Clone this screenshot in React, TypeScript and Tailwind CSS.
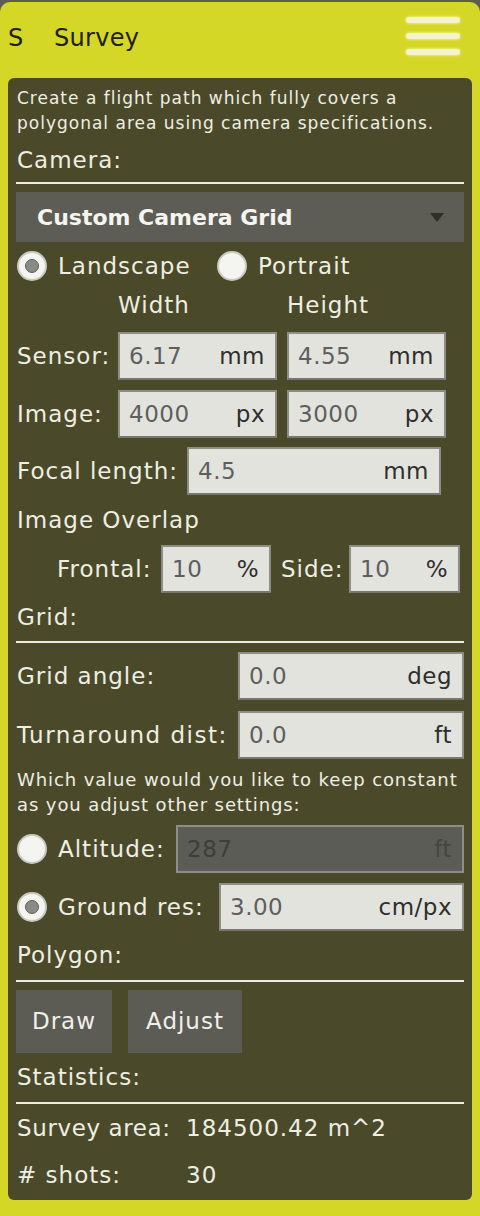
import React from 'react';

const font = { fontFamily: '"DejaVu Sans", Verdana, sans-serif' };

const Radio = ({ checked }: { checked: boolean }) => (
  <span className="flex h-[30px] w-[30px] shrink-0 items-center justify-center rounded-full border-2 border-[#c9c9bf] bg-[#f4f4f0]">
    {checked && <span className="h-[14px] w-[14px] rounded-full border border-[#5e5e5a] bg-[#8a8a86]" />}
  </span>
);

const Field = ({
  value,
  unit,
  className = '',
  disabled = false,
}: {
  value: string;
  unit: string;
  className?: string;
  disabled?: boolean;
}) => (
  <div
    className={`flex h-[48px] items-center justify-between border-2 pl-[9px] pr-[10px] text-[23px] tracking-[0.5px] ${
      disabled
        ? 'border-[#8e8e86] bg-[#5c5c56] text-[#3e3e3a]'
        : 'border-[#8e8e86] border-b-[#77776f] bg-[#e3e3de] text-[#5e5e5e]'
    } ${className}`}
  >
    <span>{value}</span>
    <span className={disabled ? 'text-[#46463f]' : 'text-[#2e2e2e]'}>{unit}</span>
  </div>
);

const Heading = ({ children, className = '' }: { children: React.ReactNode; className?: string }) => (
  <div className={`flex items-center pl-[1px] text-[23px] tracking-[1px] ${className}`}>{children}</div>
);

const Rule = () => <div className="h-[2px] bg-[#ecece4]" />;

export default function App() {
  return (
    <div className="h-[1216px] w-[480px] overflow-hidden bg-[#5d5d4c] pt-[2px]" style={font}>
      <div className="flex h-[1224px] flex-col rounded-[10px] bg-[#d5d727]">
        {/* header */}
        <div className="flex h-[76px] items-center justify-between pl-[8px] pr-[20px]">
          <div className="flex items-center pb-[4px] text-[24px] tracking-[0.3px] text-[#1f200f]">
            <span className="w-[46px]">S</span>
            <span>Survey</span>
          </div>
          <div className="flex w-[54px] flex-col gap-[10px] pb-[8px]">
            <span className="h-[6px] rounded-full bg-[#f3f4c8] shadow-[0_0_3px_#fbfbe0]" />
            <span className="h-[6px] rounded-full bg-[#f3f4c8] shadow-[0_0_3px_#fbfbe0]" />
            <span className="h-[6px] rounded-full bg-[#f3f4c8] shadow-[0_0_3px_#fbfbe0]" />
          </div>
        </div>

        {/* panel */}
        <div className="mx-[8px] flex h-[1122px] flex-col rounded-[6px] bg-[#4a4a2b] px-[8px] pt-[8px] text-[#eeeee2] text-[23px] tracking-[1px]">
          <p className="pl-[1px] text-[17px] leading-[25px] tracking-[1px]">
            Create a flight path which fully covers a polygonal area using camera specifications.
          </p>
          <Heading className="mt-[2px] h-[44px]">Camera:</Heading>
          <Rule />

          <div className="mt-[8px] flex h-[50px] items-center justify-between bg-[#5d5d55] pl-[21px] pr-[20px]">
            <span className="text-[22px] font-semibold tracking-[0px] text-[#f4f4f0]">Custom Camera Grid</span>
            <svg width="14" height="9" viewBox="0 0 14 9">
              <path d="M0 0 L14 0 L7 9 Z" fill="#2f2f2a" />
            </svg>
          </div>

          <div className="flex h-[48px] items-center">
            <div className="flex w-[201px] items-center gap-[11px] pl-[1px]">
              <Radio checked />
              <span>Landscape</span>
            </div>
            <div className="flex items-center gap-[11px]">
              <Radio checked={false} />
              <span>Portrait</span>
            </div>
          </div>

          <div className="flex h-[30px] items-center">
            <span className="w-[102px]" />
            <span className="w-[169px]">Width</span>
            <span>Height</span>
          </div>

          <div className="mt-[12px] flex items-center">
            <span className="w-[102px] pl-[1px]">Sensor:</span>
            <Field value="6.17" unit="mm" className="w-[159px]" />
            <Field value="4.55" unit="mm" className="ml-[10px] w-[159px]" />
          </div>

          <div className="mt-[10px] flex items-center">
            <span className="w-[102px] pl-[1px]">Image:</span>
            <Field value="4000" unit="px" className="w-[159px]" />
            <Field value="3000" unit="px" className="ml-[10px] w-[159px]" />
          </div>

          <div className="mt-[9px] flex items-center">
            <span className="w-[171px] pl-[1px]">Focal length:</span>
            <Field value="4.5" unit="mm" className="w-[254px]" />
          </div>

          <Heading className="h-[50px]">Image Overlap</Heading>

          <div className="flex items-center">
            <span className="w-[145px] pl-[41px]">Frontal:</span>
            <Field value="10" unit="%" className="w-[110px]" />
            <span className="w-[78px] pl-[10px]">Side:</span>
            <Field value="10" unit="%" className="w-[111px]" />
          </div>

          <Heading className="h-[48px]">Grid:</Heading>
          <Rule />

          <div className="mt-[9px] flex items-center">
            <span className="w-[222px] pl-[1px]">Grid angle:</span>
            <Field value="0.0" unit="deg" className="w-[226px]" />
          </div>

          <div className="mt-[11px] flex items-center">
            <span className="w-[222px] pl-[1px] tracking-[1.5px]">Turnaround dist:</span>
            <Field value="0.0" unit="ft" className="w-[226px]" />
          </div>

          <p className="mt-[8px] pl-[1px] text-[18px] leading-[25px] tracking-[0.9px]">
            Which value would you like to keep constant as you adjust other settings:
          </p>

          <div className="mt-[8px] flex items-center">
            <div className="flex w-[160px] items-center gap-[11px] pl-[1px]">
              <Radio checked={false} />
              <span>Altitude:</span>
            </div>
            <Field value="287" unit="ft" className="w-[288px]" disabled />
          </div>

          <div className="mt-[10px] flex items-center">
            <div className="flex w-[203px] items-center gap-[11px] pl-[1px]">
              <Radio checked />
              <span>Ground res:</span>
            </div>
            <Field value="3.00" unit="cm/px" className="w-[245px]" />
          </div>

          <Heading className="h-[49px]">Polygon:</Heading>
          <Rule />

          <div className="mt-[8px] flex gap-[16px]">
            <button className="h-[63px] w-[96px] bg-[#5c5c55] tracking-[1px] text-[#f0f0ea]">Draw</button>
            <button className="h-[63px] w-[114px] bg-[#5c5c55] tracking-[1px] text-[#f0f0ea]">Adjust</button>
          </div>

          <Heading className="h-[49px]">Statistics:</Heading>
          <Rule />

          <div className="flex h-[48px] items-center">
            <span className="w-[170px] pl-[1px] tracking-[0.6px]">Survey area:</span>
            <span>184500.42 m^2</span>
          </div>
          <div className="flex h-[46px] items-center">
            <span className="w-[170px] pl-[1px]"># shots:</span>
            <span>30</span>
          </div>
        </div>
      </div>
    </div>
  );
}
